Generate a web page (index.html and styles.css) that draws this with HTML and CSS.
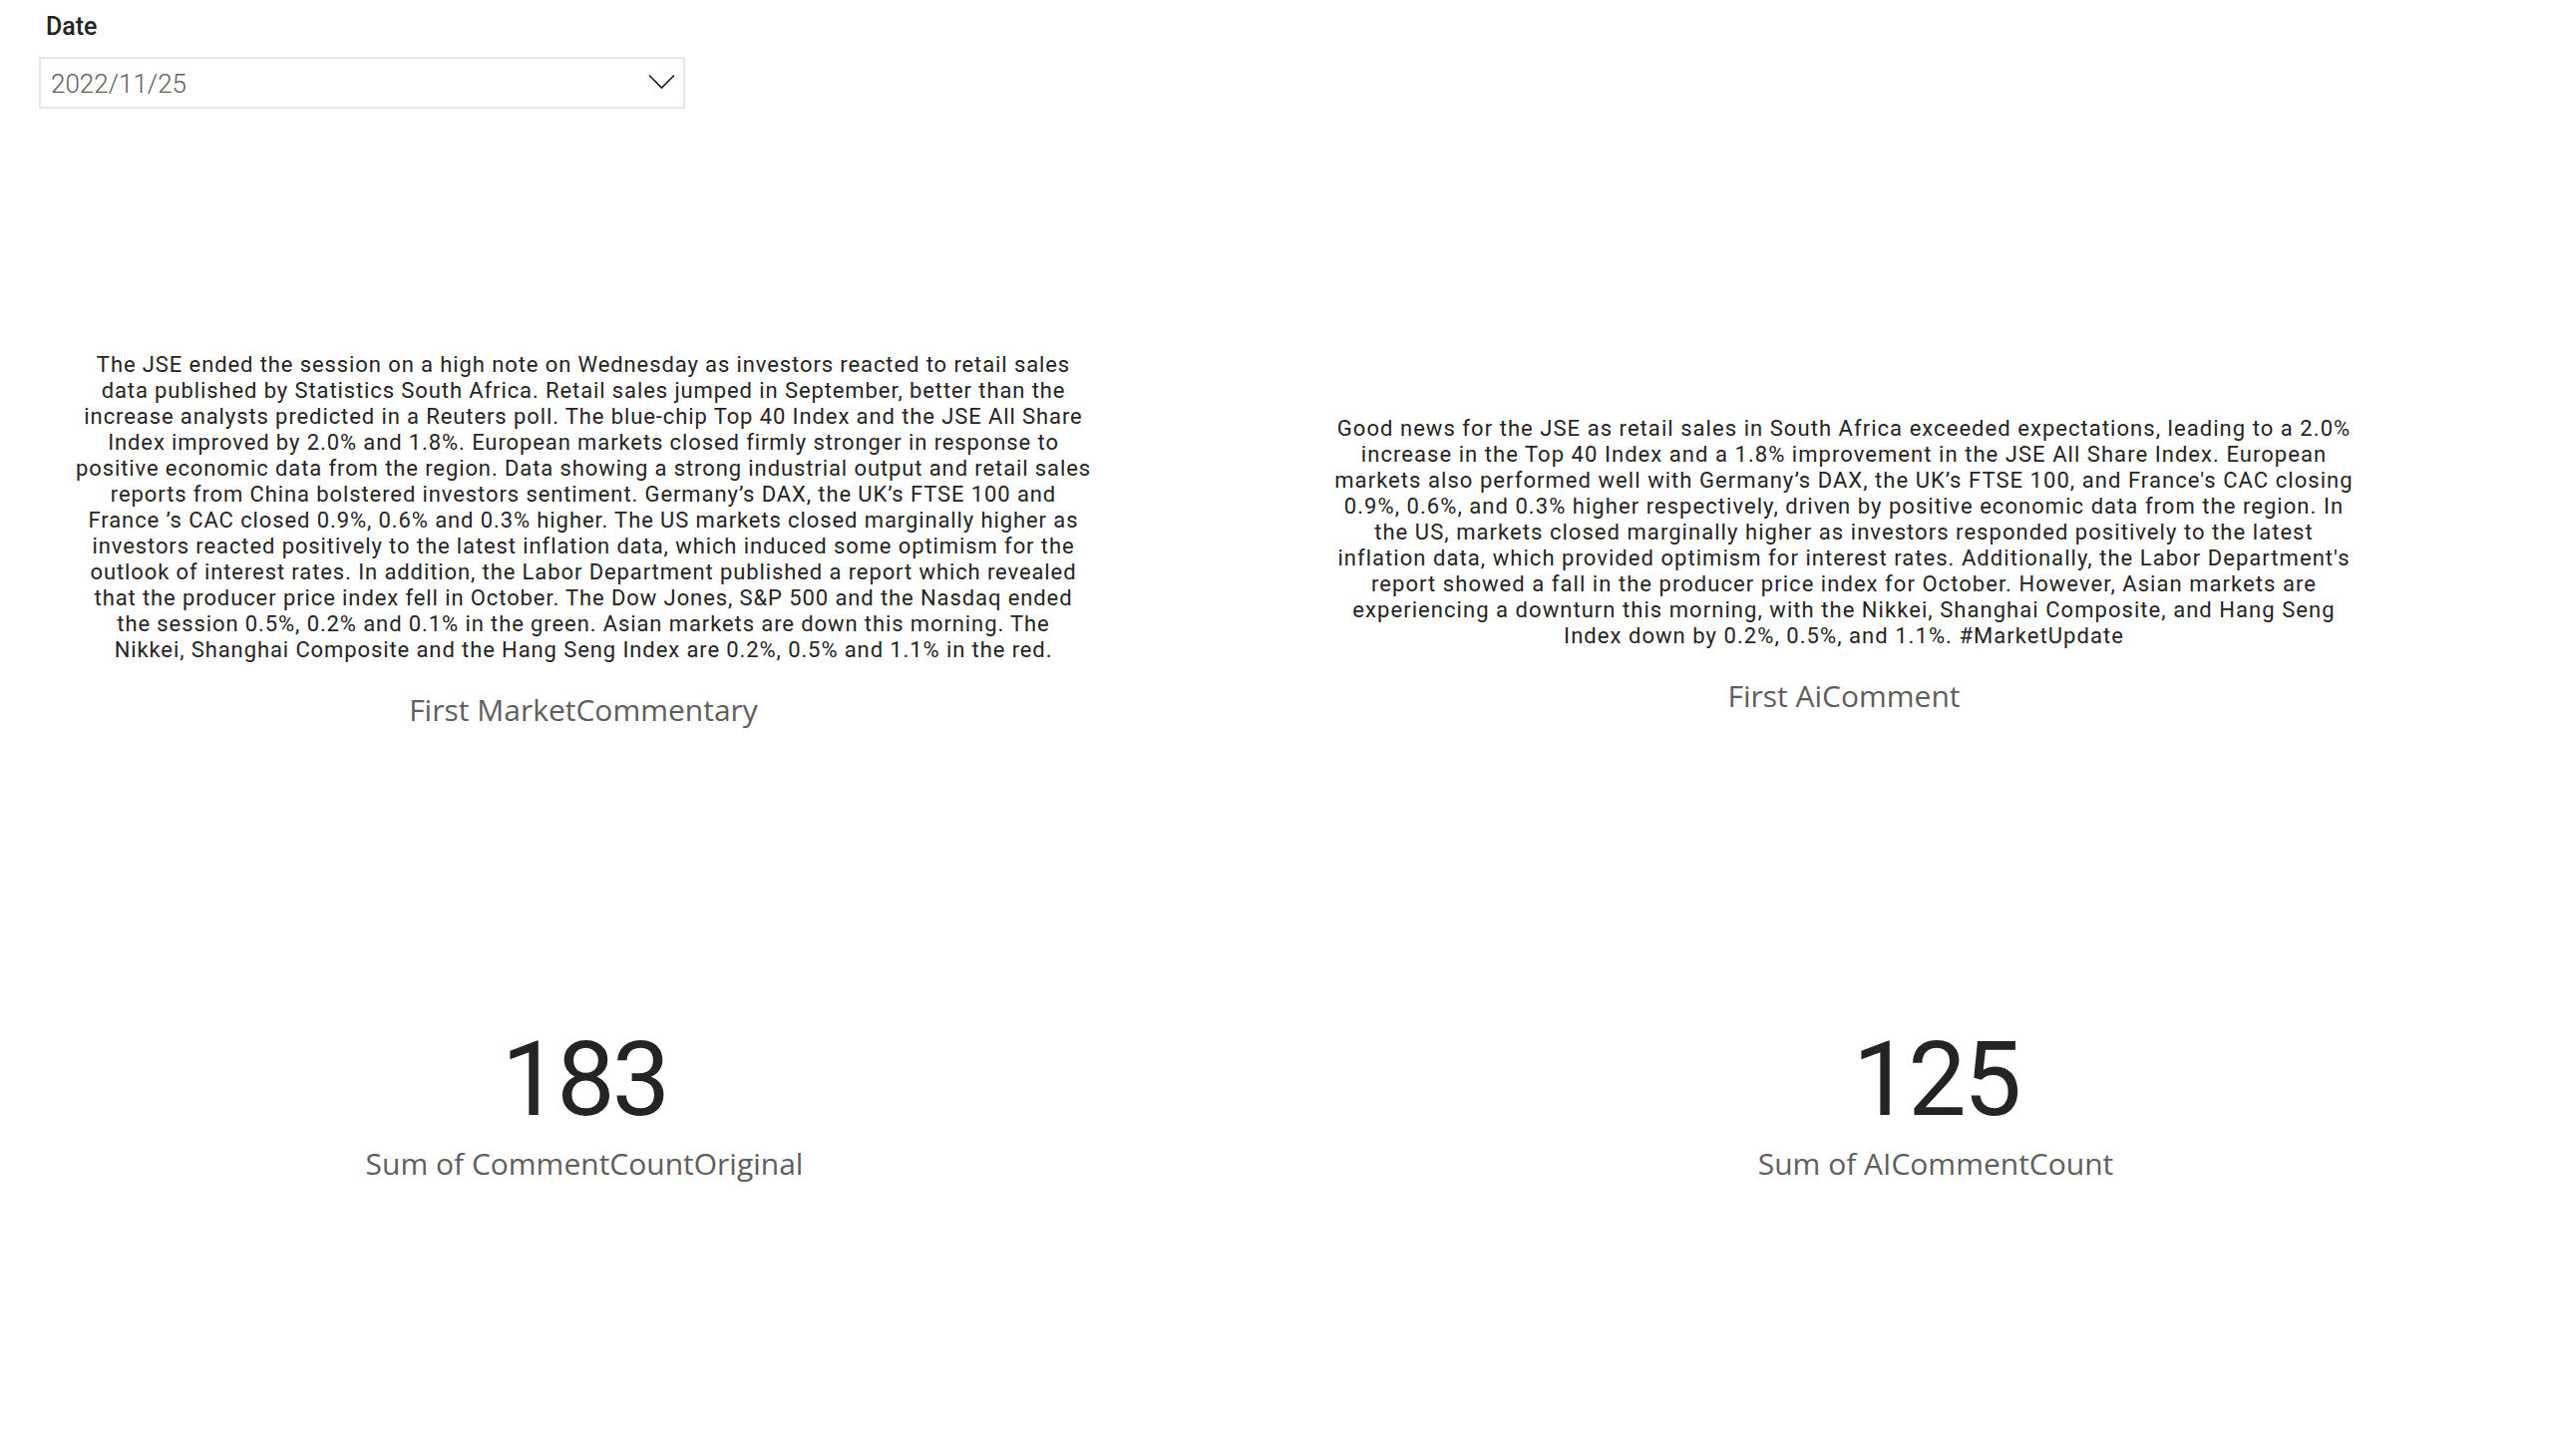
FILE: index.html
```html
<!DOCTYPE html>
<html lang="en">
<head>
<meta charset="utf-8">
<title>Report</title>
<link rel="stylesheet" href="styles.css">
</head>
<body>
<div class="report">
  <section class="slicer">
    <div class="slicer-title">Date</div>
    <div class="dropdown">
      <span class="dropdown-value">2022/11/25</span>
      <svg class="chevron" width="27" height="16" viewBox="0 0 27 16"><polyline points="1,1.5 13.5,14 26,1.5" fill="none" stroke="#1b1a19" stroke-width="1.6"/></svg>
    </div>
  </section>

  <section class="row texts">
    <div class="textvis left">
      <p class="body-text">The JSE ended the session on a high note on Wednesday as investors reacted to retail sales<br>data published by Statistics South Africa. Retail sales jumped in September, better than the<br>increase analysts predicted in a Reuters poll. The blue-chip Top 40 Index and the JSE All Share<br>Index improved by 2.0% and 1.8%. European markets closed firmly stronger in response to<br>positive economic data from the region. Data showing a strong industrial output and retail sales<br>reports from China bolstered investors sentiment. Germany’s DAX, the UK’s FTSE 100 and<br>France ’s CAC closed 0.9%, 0.6% and 0.3% higher. The US markets closed marginally higher as<br>investors reacted positively to the latest inflation data, which induced some optimism for the<br>outlook of interest rates. In addition, the Labor Department published a report which revealed<br>that the producer price index fell in October. The Dow Jones, S&amp;P 500 and the Nasdaq ended<br>the session 0.5%, 0.2% and 0.1% in the green. Asian markets are down this morning. The<br>Nikkei, Shanghai Composite and the Hang Seng Index are 0.2%, 0.5% and 1.1% in the red.</p>
      <div class="caption">First MarketCommentary</div>
    </div>
    <div class="textvis right">
      <p class="body-text wide">Good news for the JSE as retail sales in South Africa exceeded expectations, leading to a 2.0%<br>increase in the Top 40 Index and a 1.8% improvement in the JSE All Share Index. European<br>markets also performed well with Germany’s DAX, the UK’s FTSE 100, and France's CAC closing<br>0.9%, 0.6%, and 0.3% higher respectively, driven by positive economic data from the region. In<br>the US, markets closed marginally higher as investors responded positively to the latest<br>inflation data, which provided optimism for interest rates. Additionally, the Labor Department's<br>report showed a fall in the producer price index for October. However, Asian markets are<br>experiencing a downturn this morning, with the Nikkei, Shanghai Composite, and Hang Seng<br>Index down by 0.2%, 0.5%, and 1.1%. #MarketUpdate</p>
      <div class="caption">First AiComment</div>
    </div>
  </section>

  <section class="row cards">
    <div class="card left">
      <div class="card-value">183</div>
      <div class="card-label">Sum of CommentCountOriginal</div>
    </div>
    <div class="card right">
      <div class="card-value">125</div>
      <div class="card-label">Sum of AICommentCount</div>
    </div>
  </section>
</div>
</body>
</html>
```

FILE: styles.css
```css
html, body {
  margin: 0;
  padding: 0;
  background: #ffffff;
}

.report {
  width: 2560px;
  height: 1460px;
  display: flex;
  flex-direction: column;
  font-family: Roboto, "Liberation Sans", sans-serif;
  color: #252423;
}

/* Slicer */
.slicer {
  margin-left: 39px;
  width: 648px;
  padding-top: 11px;
}

.slicer-title {
  font-family: Roboto, sans-serif;
  font-weight: 500;
  font-size: 25px;
  line-height: 32px;
  padding-left: 7px;
  color: #252423;
}

.dropdown {
  margin-top: 14px;
  height: 46px;
  border: 2px solid #e6e6e6;
  display: flex;
  align-items: center;
  justify-content: space-between;
  padding: 2px 8px 0 10px;
  box-sizing: content-box;
}

.dropdown-value {
  font-family: Roboto, sans-serif;
  font-weight: 300;
  font-size: 26px;
  color: #605e5c;
}

.chevron {
  display: block;
  margin-top: -4px;
}

/* Text visuals */
.row {
  display: flex;
  align-items: flex-start;
}

.textvis {
  display: flex;
  flex-direction: column;
  align-items: center;
}

.textvis.left {
  margin-left: 40px;
  width: 1090px;
  padding-top: 244px;
}

.textvis.right {
  margin-left: 172px;
  width: 1094px;
  padding-top: 308px;
}

.body-text {
  margin: 0;
  font-family: Roboto, sans-serif;
  font-size: 22px;
  line-height: 26px;
  letter-spacing: 0.9px;
  text-align: center;
  white-space: nowrap;
  color: #252423;
}

.body-text.wide {
  letter-spacing: 1.05px;
}

.caption {
  font-family: "Open Sans", sans-serif;
  font-size: 30px;
  line-height: 40px;
  color: #605e5c;
  margin-top: 27px;
  white-space: nowrap;
}

/* Cards */
.card {
  display: flex;
  flex-direction: column;
  align-items: center;
}

.card.left {
  margin-left: 40px;
  width: 1092px;
  padding-top: 291px;
}

.card.right {
  margin-left: 358px;
  width: 902px;
  padding-top: 291px;
}

.card-value {
  font-family: Roboto, sans-serif;
  font-size: 104px;
  line-height: 120px;
  letter-spacing: -3px;
  color: #252423;
}

.card-label {
  font-family: "Open Sans", sans-serif;
  font-size: 30px;
  line-height: 40px;
  margin-top: 4px;
  color: #605e5c;
}
```
